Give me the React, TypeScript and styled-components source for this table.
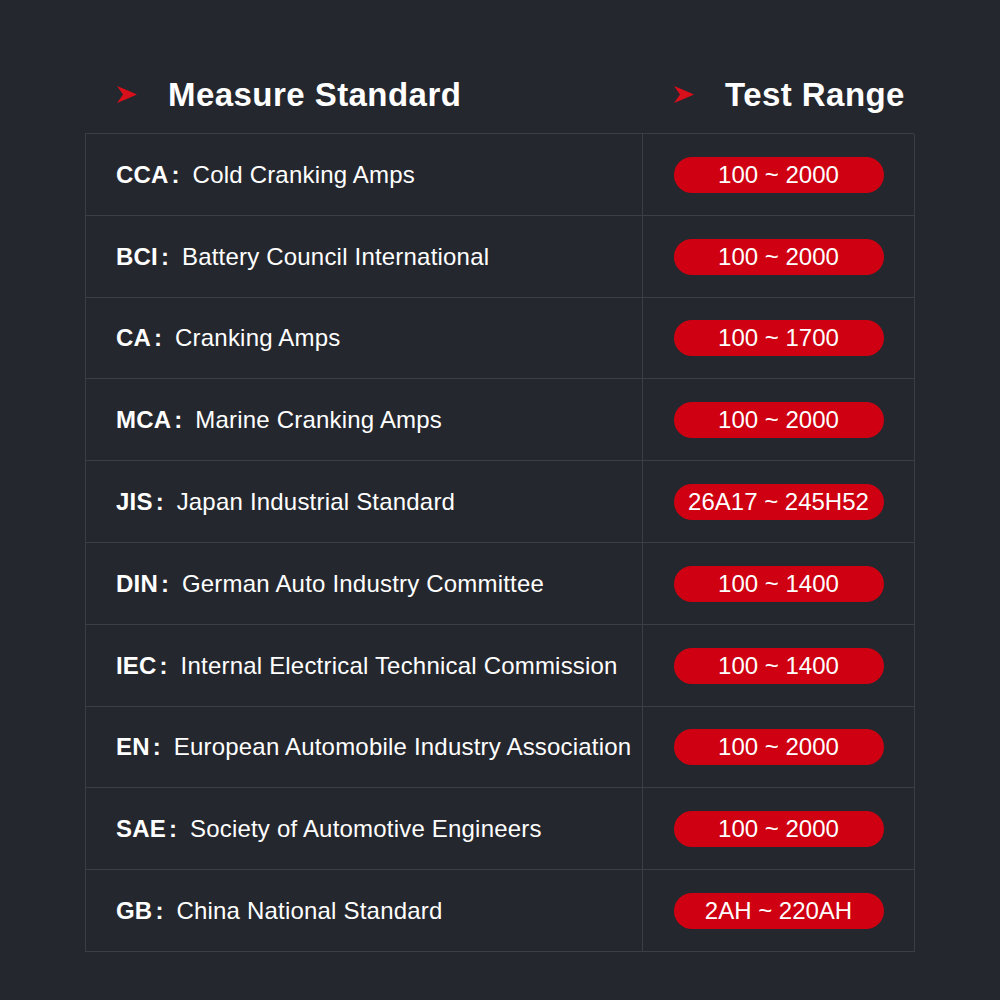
import React from "react";
import styled, { createGlobalStyle } from "styled-components";

const Global = createGlobalStyle`
  html, body { margin: 0; padding: 0; background: #25272e; }
  body { font-family: "Liberation Sans", Arial, "Noto Sans CJK SC", sans-serif; }
`;

const Page = styled.div`
  width: 1000px;
  height: 1000px;
  background: #25272e;
  box-sizing: border-box;
  padding: 55px 86px 0 85px;
  color: #ffffff;
`;

const Grid = styled.div`
  display: grid;
  grid-template-columns: 557px 272px;
  width: 829px;
`;

const HeadCell = styled.div`
  display: flex;
  align-items: center;
  height: 78px;
  padding-left: 32px;
  gap: 31px;
`;

const HeadTitle = styled.span`
  font-size: 33px;
  font-weight: 700;
  line-height: 33px;
  letter-spacing: 0.45px;
`;

const Table = styled.div`
  display: grid;
  grid-template-columns: 557px 272px;
  width: 829px;
  border-top: 1px solid #3b3e46;
  border-left: 1px solid #3b3e46;
  box-sizing: border-box;
`;

const Cell = styled.div<{ $right?: boolean }>`
  height: 81.8px;
  display: flex;
  align-items: center;
  justify-content: ${(p) => (p.$right ? "center" : "flex-start")};
  padding-left: ${(p) => (p.$right ? "0" : "30px")};
  padding-right: ${(p) => (p.$right ? "2px" : "0")};
  padding-top: 1px;
  box-sizing: border-box;
  border-right: 1px solid #3b3e46;
  border-bottom: 1px solid #3b3e46;
  font-size: 24px;
  white-space: nowrap;
`;

const Label = styled.span`
  font-weight: 700;
  letter-spacing: 0.2px;
`;

const Colon = styled.span`
  font-weight: 700;
  display: inline-block;
  width: 21px;
  padding-left: 3px;
`;

const Desc = styled.span`
  font-weight: 400;
  letter-spacing: 0.2px;
`;

const Pill = styled.div`
  width: 210px;
  height: 36px;
  border-radius: 18px;
  background: #cf0011;
  color: #ffffff;
  font-size: 24px;
  display: flex;
  align-items: center;
  justify-content: center;
  margin-left: 2px;
`;

const Arrow = () => (
  <svg width="20" height="17" viewBox="0 0 20 17" style={{ flexShrink: 0 }}>
    <path d="M0 0 Q10 4 20 8.5 Q10 13 0 17 L6 8.5 Z" fill="#d8101c" />
  </svg>
);

const rows: [string, string, string][] = [
  ["CCA", "Cold Cranking Amps", "100 ~ 2000"],
  ["BCI", "Battery Council International", "100 ~ 2000"],
  ["CA", "Cranking Amps", "100 ~ 1700"],
  ["MCA", "Marine Cranking Amps", "100 ~ 2000"],
  ["JIS", "Japan Industrial Standard", "26A17 ~ 245H52"],
  ["DIN", "German Auto Industry Committee", "100 ~ 1400"],
  ["IEC", "Internal Electrical Technical Commission", "100 ~ 1400"],
  ["EN", "European Automobile Industry Association", "100 ~ 2000"],
  ["SAE", "Society of Automotive Engineers", "100 ~ 2000"],
  ["GB", "China National Standard", "2AH ~ 220AH"],
];

export default function App() {
  return (
    <Page>
      <Global />
      <Grid>
        <HeadCell>
          <Arrow />
          <HeadTitle>Measure Standard</HeadTitle>
        </HeadCell>
        <HeadCell>
          <Arrow />
          <HeadTitle>Test Range</HeadTitle>
        </HeadCell>
      </Grid>
      <Table>
        {rows.map(([code, desc, range]) => (
          <React.Fragment key={code}>
            <Cell>
              <Label>{code}</Label>
              <Colon>:</Colon>
              <Desc>{desc}</Desc>
            </Cell>
            <Cell $right>
              <Pill>{range}</Pill>
            </Cell>
          </React.Fragment>
        ))}
      </Table>
    </Page>
  );
}
